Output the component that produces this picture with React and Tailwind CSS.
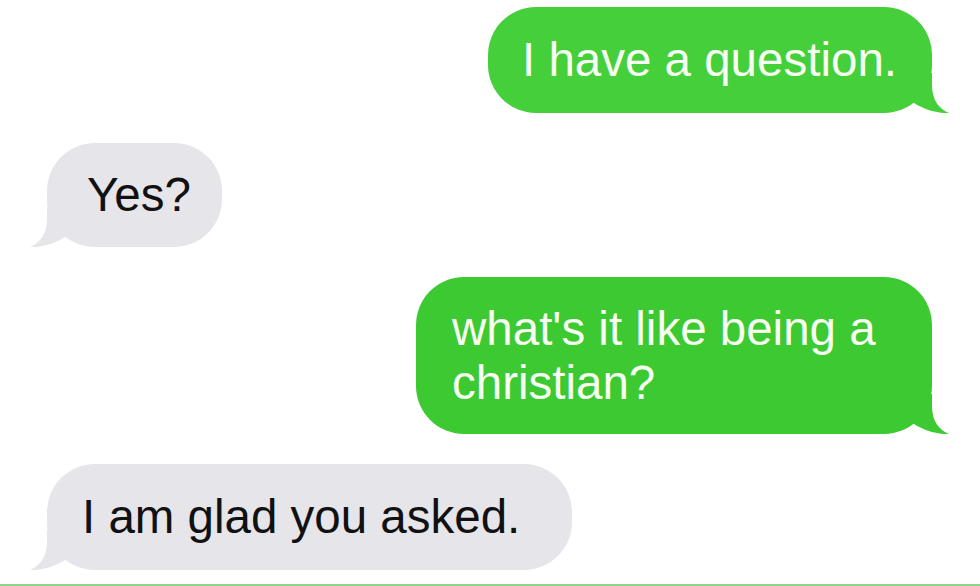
const messages = [
  { id: 1, side: 'right', text: 'I have a question.', fill: '#45cf3b', bubble: 'w-[444px] h-[106px] mr-[48px] pl-[34px] bg-[#45cf3b]', mt: 'mt-[7px]' },
  { id: 2, side: 'left', text: 'Yes?', fill: '#e5e5ea', bubble: 'w-[175px] h-[104px] ml-[47px] pl-[40px] bg-[#e5e5ea]', mt: 'mt-[30px]' },
  { id: 3, side: 'right', text: "what's it like being a christian?", fill: '#3dc931', bubble: 'w-[516px] h-[157px] mr-[48px] pl-[36px] pr-[36px] bg-[#3dc931]', mt: 'mt-[30px]' },
  { id: 4, side: 'left', text: 'I am glad you asked.', fill: '#e5e5ea', bubble: 'w-[525px] h-[106px] ml-[47px] pl-[35px] bg-[#e5e5ea]', mt: 'mt-[30px]' },
];

// tail drawn for the right side, mirrored for the left one
function Tail({ side, fill }) {
  return (
    <svg
      className={`absolute bottom-0 w-[56px] h-[40px] ${side === 'right' ? 'right-[-18px]' : 'left-[-18px] -scale-x-100'}`}
      viewBox="0 0 56 40"
    >
      <path d="M0 0 H38 V12 C38 27 45 36 55 40 C44 40.5 31 37 20 30 L0 30 Z" fill={fill} />
    </svg>
  );
}

function Bubble({ msg }) {
  const isMe = msg.side === 'right';
  return (
    <div className={`${msg.mt} ${isMe ? 'self-end' : 'self-start'}`}>
      <div className={`relative flex items-center rounded-[48px] ${msg.bubble} ${isMe ? 'text-[#f6fff2]' : 'text-[#111111]'}`}>
        <Tail side={msg.side} fill={msg.fill} />
        <p className="relative text-[47.5px] leading-[54px]">{msg.text}</p>
      </div>
    </div>
  );
}

export default function App() {
  return (
    <div className="w-[980px] h-[586px] bg-white flex flex-col overflow-hidden font-['Liberation_Sans',Arial,sans-serif]">
      {messages.map((m) => (
        <Bubble key={m.id} msg={m} />
      ))}
      <div className="mt-auto h-[2px] bg-[#92d28c]" />
    </div>
  );
}
